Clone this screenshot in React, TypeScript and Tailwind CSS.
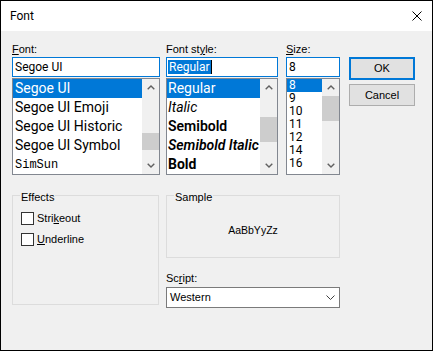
const ChevronUp = () => (
  <svg width="8" height="5" viewBox="0 0 8 5">
    <path d="M0.7 4.3 L4 1 L7.3 4.3" fill="none" stroke="#606060" strokeWidth="1.4" />
  </svg>
);

const ChevronDown = () => (
  <svg width="8" height="5" viewBox="0 0 8 5">
    <path d="M0.7 0.7 L4 4 L7.3 0.7" fill="none" stroke="#606060" strokeWidth="1.4" />
  </svg>
);

function ScrollBar({ thumb }: { thumb: string }) {
  return (
    <div className="flex w-[17px] shrink-0 flex-col bg-[#f0f0f0]">
      <div className="flex h-[17px] items-center justify-center">
        <ChevronUp />
      </div>
      <div className="flex-1">
        <div className={`w-full bg-[#cdcdcd] ${thumb}`} />
      </div>
      <div className="flex h-[17px] items-center justify-center">
        <ChevronDown />
      </div>
    </div>
  );
}

const fonts = ['Segoe UI', 'Segoe UI Emoji', 'Segoe UI Historic', 'Segoe UI Symbol'];
const sizes = ['8', '9', '10', '11', '12', '14', '16'];

export default function App() {
  return (
    <div className="flex h-[351px] w-[433px] flex-col border border-black bg-[#f0f0f0] font-['Liberation_Sans',Arial,sans-serif] text-[11px] text-black">
      {/* Title bar */}
      <div className="flex h-[30px] shrink-0 items-center justify-between bg-white pl-[9px] pr-[10px]">
        <span className="font-['Roboto',sans-serif] text-[12px]">Font</span>
        <svg width="10" height="10" viewBox="0 0 10 10">
          <path d="M0.5 0.5 L9.5 9.5 M9.5 0.5 L0.5 9.5" stroke="#000" strokeWidth="1" />
        </svg>
      </div>

      <div className="flex-1 pl-[11px] pt-[11px]">
        {/* Top row: lists + buttons */}
        <div className="flex">
          {/* Font */}
          <div className="w-[148px]">
            <div className="h-[15px] leading-[15px]">
              <u>F</u>ont:
            </div>
            <div className="flex h-[20px] items-center border border-[#0078d7] bg-white px-[2px] font-['Roboto',sans-serif] text-[12px]">
              Segoe UI
            </div>
            <div className="mt-[1px] flex h-[97px] border border-[#828790] bg-white">
              <div className="flex-1 overflow-hidden">
                {fonts.map((f, i) => (
                  <div
                    key={f}
                    className={`flex h-[19px] items-center whitespace-nowrap px-[2px] font-['Roboto',sans-serif] text-[14px] ${
                      i === 0 ? 'bg-[#0078d7] text-white' : ''
                    }`}
                  >
                    {f}
                  </div>
                ))}
                <div className="flex h-[19px] items-center whitespace-nowrap px-[2px] font-['Liberation_Mono',monospace] text-[12px]">
                  SimSun
                </div>
              </div>
              <ScrollBar thumb="mt-[37px] h-[17px]" />
            </div>
          </div>

          {/* Font style */}
          <div className="ml-[6px] w-[112px]">
            <div className="h-[15px] leading-[15px]">
              Font st<u>y</u>le:
            </div>
            <div className="flex h-[20px] items-center border border-[#0078d7] bg-white px-[1px] font-['Roboto',sans-serif] text-[12px]">
              <span className="bg-[#0078d7] px-[1px] leading-[14px] text-white">Regular</span>
              <span className="h-[14px] w-[1px] bg-black" />
            </div>
            <div className="mt-[1px] flex h-[97px] border border-[#828790] bg-white">
              <div className="flex-1 overflow-hidden whitespace-nowrap font-['Roboto',sans-serif] text-[14px]">
                <div className="flex h-[19px] items-center bg-[#0078d7] px-[1px] text-white">Regular</div>
                <div className="flex h-[19px] items-center px-[1px] italic">Italic</div>
                <div className="flex h-[19px] items-center px-[1px] font-semibold">Semibold</div>
                <div className="flex h-[19px] items-center px-[1px] font-semibold italic">Semibold Italic</div>
                <div className="flex h-[19px] items-center px-[1px] font-bold">Bold</div>
              </div>
              <ScrollBar thumb="mt-[21px] h-[25px]" />
            </div>
          </div>

          {/* Size */}
          <div className="ml-[8px] w-[54px]">
            <div className="h-[15px] leading-[15px]">
              <u>S</u>ize:
            </div>
            <div className="flex h-[20px] items-center border border-[#0078d7] bg-white px-[2px] font-['Roboto',sans-serif] text-[12px]">
              8
            </div>
            <div className="mt-[1px] flex h-[97px] border border-[#828790] bg-white">
              <div className="flex-1 overflow-hidden font-['Roboto',sans-serif] text-[12px]">
                {sizes.map((s, i) => (
                  <div
                    key={s}
                    className={`h-[13px] px-[2px] leading-[13px] ${i === 0 ? 'bg-[#0078d7] text-white' : ''}`}
                  >
                    {s}
                  </div>
                ))}
              </div>
              <ScrollBar thumb="mt-0 h-[25px]" />
            </div>
          </div>

          {/* Buttons */}
          <div className="ml-[9px] w-[66px] pt-[15px]">
            <div className="flex h-[23px] items-center justify-center border-2 border-[#0078d7] bg-[#e1e1e1]">
              OK
            </div>
            <div className="mt-[4px] flex h-[22px] items-center justify-center border border-[#adadad] bg-[#e1e1e1]">
              Cancel
            </div>
          </div>
        </div>

        {/* Lower row */}
        <div className="mt-[20px] flex">
          {/* Effects */}
          <div className="h-[110px] w-[147px] border border-[#dcdcdc]">
            <div className="-mt-[5px] ml-[7px] w-fit bg-[#f0f0f0] px-[1px] leading-[13px]">Effects</div>
            <div className="ml-[8px] mt-[8px] flex flex-col gap-[8px]">
              <div className="flex items-center gap-[3px] leading-[13px]">
                <span className="h-[13px] w-[13px] border border-[#333333] bg-white" />
                <span>
                  Stri<u>k</u>eout
                </span>
              </div>
              <div className="flex items-center gap-[3px] leading-[13px]">
                <span className="h-[13px] w-[13px] border border-[#333333] bg-white" />
                <span>
                  <u>U</u>nderline
                </span>
              </div>
            </div>
          </div>

          {/* Sample + Script */}
          <div className="ml-[7px] w-[174px]">
            <div className="flex h-[63px] flex-col border border-[#dcdcdc]">
              <div className="-mt-[5px] ml-[7px] w-fit bg-[#f0f0f0] px-[1px] leading-[13px]">Sample</div>
              <div className="flex flex-1 items-center justify-center text-[10.5px] leading-[13px]">AaBbYyZz</div>
            </div>
            <div className="mt-[14px] h-[13px] leading-[13px]">
              Sc<u>r</u>ipt:
            </div>
            <div className="mt-[2px] flex h-[21px] items-center justify-between border border-[#7a7a7a] bg-white pl-[3px] pr-[4px] leading-[13px]">
              <span>Western</span>
              <svg width="9" height="5" viewBox="0 0 9 5">
                <path d="M0.5 0.5 L4.5 4.5 L8.5 0.5" fill="none" stroke="#404040" strokeWidth="1" />
              </svg>
            </div>
          </div>
        </div>
      </div>
    </div>
  );
}
